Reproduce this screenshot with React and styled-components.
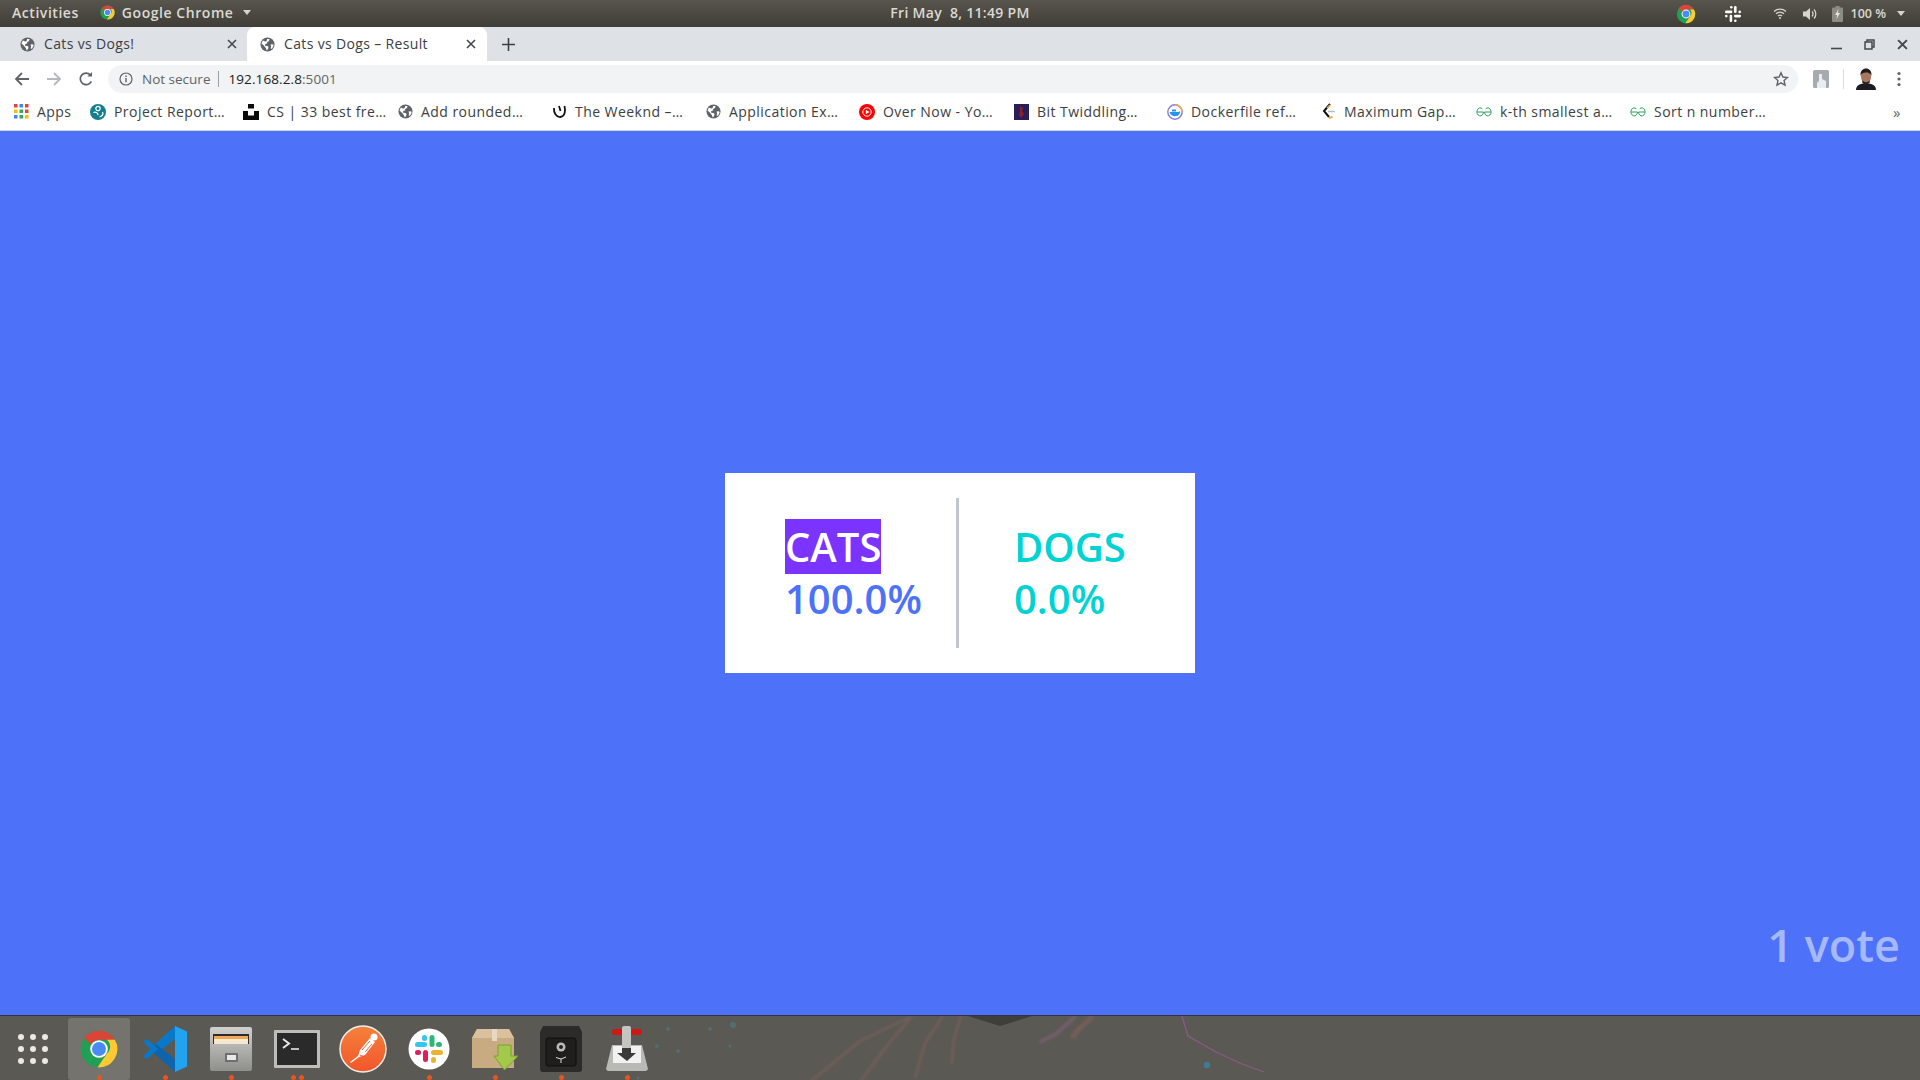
import React from 'react'
import styled, { createGlobalStyle } from 'styled-components'

const GlobalStyle = createGlobalStyle`
  html, body { margin: 0; padding: 0; height: 100%; overflow: hidden; }
  #root { height: 100%; }
`

const Screen = styled.div`
  width: 1920px;
  height: 1080px;
  display: flex;
  flex-direction: column;
  font-family: "Open Sans", "Noto Sans", sans-serif;
  overflow: hidden;
`

const TopBar = styled.div`
  height: 27px;
  flex: none;
  display: grid;
  grid-template-columns: 1fr auto 1fr;
  align-items: center;
  padding: 0 12px;
  background: linear-gradient(#58554d, #3f3d37);
  color: #dbd9d2;
  font-size: 14px;
  font-weight: 600;
  letter-spacing: .55px;
  white-space: pre;
`

const TopLeft = styled.div`
  display: flex;
  align-items: center;
  transform: translateY(-1px);
`

const AppMenu = styled.div`
  display: flex;
  align-items: center;
  gap: 6px;
  margin-left: 20px;
`

const Clock = styled.span`
  letter-spacing: .3px;
  transform: translateY(-1px);
`

const TopRight = styled.div`
  display: flex;
  align-items: center;
  justify-content: flex-end;
  padding-right: 3px;
  font-size: 12.5px;
  letter-spacing: 0;
`

const TrayIcon = styled.span`
  display: flex;
  margin-right: ${p => p.$gap || 0}px;
`

const Caret = styled.span`
  width: 0;
  height: 0;
  border-left: 4.5px solid transparent;
  border-right: 4.5px solid transparent;
  border-top: 5px solid #d6d4cd;
  margin-left: ${p => p.$left || 0}px;
`

const TabStrip = styled.div`
  height: 34px;
  flex: none;
  display: flex;
  align-items: stretch;
  background: #dee1e6;
  color: #3c4043;
`

const Tab = styled.div`
  width: ${p => p.$width}px;
  box-sizing: border-box;
  display: flex;
  align-items: center;
  gap: 9px;
  padding: 0 ${p => p.$active ? 11 : 10}px 0 ${p => p.$active ? 13 : 20}px;
  background: ${p => p.$active ? '#fff' : 'transparent'};
  border-radius: ${p => p.$active ? '8px 8px 0 0' : '0'};
  white-space: nowrap;
`

const TabTitle = styled.span`
  flex: 1;
  font-size: 14px;
  letter-spacing: .35px;
  transform: translateY(-1px);
`

const NewTab = styled.div`
  width: 42px;
  display: flex;
  align-items: center;
  justify-content: center;
`

const WindowControls = styled.div`
  margin-left: auto;
  display: flex;
  align-items: center;
  gap: 22px;
  padding-right: 12px;
`

const Toolbar = styled.div`
  height: 32px;
  flex: none;
  box-sizing: border-box;
  padding-top: 4px;
  display: flex;
  align-items: center;
  background: #fff;
`

const NavButtons = styled.div`
  width: 108px;
  flex: none;
  display: flex;
  align-items: center;
  gap: 16px;
  padding-left: 14px;
  box-sizing: border-box;
`

const AddressBar = styled.div`
  width: 1690px;
  height: 28px;
  flex: none;
  box-sizing: border-box;
  display: flex;
  align-items: center;
  padding: 0 9px 0 11px;
  border-radius: 14px;
  background: #f1f3f4;
  font-size: 13.5px;
  color: #5f6368;
`

const Secure = styled.span`
  margin-left: 9px;
  padding-right: 8px;
  border-right: 1px solid #9aa0a6;
  line-height: 16px;
`

const Url = styled.span`
  margin-left: 9px;
  color: #202124;
  flex: 1;
  letter-spacing: .1px;
`

const UrlPort = styled.span`
  color: #5f6368;
`

const ToolbarEnd = styled.div`
  display: flex;
  align-items: center;
  padding-left: 15px;
`

const ToolbarDivider = styled.span`
  width: 1px;
  height: 20px;
  background: #dadce0;
  margin: 0 12px 0 14px;
`

const KebabSlot = styled.span`
  display: flex;
  margin-left: 21px;
`

const BookmarksBar = styled.div`
  height: 38px;
  flex: none;
  box-sizing: border-box;
  display: flex;
  align-items: center;
  padding-left: 14px;
  background: #fff;
  border-bottom: 1px solid #cfd1d4;
  font-size: 14px;
  letter-spacing: .45px;
  color: #3c4043;
`

const Bookmark = styled.div`
  width: ${p => p.$width || 154}px;
  flex: none;
  display: flex;
  align-items: center;
  gap: 8px;
  white-space: nowrap;
`

const BookmarkMore = styled.span`
  margin-left: auto;
  padding-right: 19px;
  font-size: 15px;
  color: #5f6368;
`

const Page = styled.main`
  flex: 1;
  position: relative;
  display: flex;
  align-items: center;
  justify-content: center;
  background: #4d72f9;
`

const ResultCard = styled.section`
  width: 470px;
  height: 200px;
  display: flex;
  align-items: center;
  background: #fff;
  font-size: 40px;
  font-weight: 600;
  line-height: 52px;
`

const Choice = styled.div`
  flex: none;
  width: ${p => p.$width}px;
  height: 150px;
  box-sizing: border-box;
  padding-top: 23px;
  padding-left: ${p => p.$pad}px;
  border-right: ${p => p.$divider ? '3px solid #bfc6d0' : 'none'};
  color: ${p => p.$color};
`

const Winner = styled.span`
  background: #7b33ff;
  color: #fff;
`

const VoteCount = styled.div`
  position: absolute;
  right: 20px;
  bottom: 40px;
  color: #a6b9fc;
  font-size: 45px;
  font-weight: 600;
  line-height: 60px;
`

const Dock = styled.footer`
  height: 65px;
  flex: none;
  position: relative;
  display: flex;
  align-items: center;
  background: #5b5954;
  border-top: 1px solid #34333a;
  box-sizing: border-box;
`

const Wallpaper = styled.svg`
  position: absolute;
  left: 0;
  top: 0;
`

const DockItem = styled.div`
  position: relative;
  width: 62px;
  height: 62px;
  flex: none;
  display: flex;
  align-items: center;
  justify-content: center;
  box-sizing: border-box;
  border-radius: 3px;
  background: ${p => p.$active ? '#75736e' : 'transparent'};
  margin: 2px 2px 0;
`

const RunDots = styled.div`
  position: absolute;
  bottom: 0;
  left: 0;
  right: 0;
  display: flex;
  justify-content: center;
  gap: 3px;
`

const RunDot = styled.span`
  width: 5px;
  height: 5px;
  border-radius: 50%;
  background: #e9541f;
`

const Chrome = ({ size }) => (
  <svg width={size} height={size} viewBox="0 0 48 48">
    <circle cx="24" cy="24" r="20" fill="#1fa055" />
    <path d="M7.7 12.4A20 20 0 0 1 41.32 14H24a10 10 0 0 0-8.66 5z" fill="#db4437" />
    <path d="M41.32 14A20 20 0 0 1 22.5 44l10.16-15a10 10 0 0 0 0-15z" fill="#fcc934" />
    <circle cx="24" cy="24" r="9.6" fill="#fff" />
    <circle cx="24" cy="24" r="7.6" fill="#4a8af4" />
  </svg>
)

const Globe = () => (
  <svg width="15" height="15" viewBox="0 0 16 16">
    <circle cx="8" cy="8" r="7.5" fill="#5f6368" />
    <path d="M3 3.6l2.6 1.3 1.4-.5.6-2.4 2.6.1-.7 2.2-2 1.2.1 1.5-2 .4-.2 2 2.6.1 1.1 1.2-.5 2.1-1.4 1.6-1-2.7-2.2-2.6L1.6 7zM11.2 8l2.8-.2.5 1.6-1.8 3-1.4-.2.6-2.2z" fill="#fff" />
  </svg>
)

const Close = ({ size = 10, color = '#45484c', width = 1.6 }) => (
  <svg width={size} height={size} viewBox="0 0 10 10">
    <path d="M1 1l8 8M9 1L1 9" stroke={color} strokeWidth={width} fill="none" />
  </svg>
)

const SlackMono = () => (
  <svg width="18" height="18" viewBox="0 0 18 18" fill="#fff">
    <rect x="10" y="1" width="2.600" height="7" rx="1.300" />
    <rect x="6" y="1" width="2.600" height="2.600" rx="1.300" />
    <rect x="1" y="5.600" width="7.400" height="2.600" rx="1.300" />
    <rect x="14.400" y="5.600" width="2.600" height="2.600" rx="1.300" />
    <rect x="10" y="9.800" width="7" height="2.600" rx="1.300" />
    <rect x="1" y="9.800" width="2.600" height="2.600" rx="1.300" />
    <rect x="5.600" y="9.800" width="2.600" height="7.200" rx="1.300" />
    <rect x="10" y="14.400" width="2.600" height="2.600" rx="1.300" />
  </svg>
)

const Wifi = () => (
  <svg width="14" height="13" viewBox="0 0 14 13" fill="none" stroke="#d6d4cd" strokeWidth="1.4">
    <path d="M1 4.4a9 9 0 0 1 12 0M3 6.8a6 6 0 0 1 8 0M5 9a3 3 0 0 1 4 0" />
    <circle cx="7" cy="11" r="1" fill="#d6d4cd" stroke="none" />
  </svg>
)

const Volume = () => (
  <svg width="16" height="14" viewBox="0 0 16 14" fill="none" stroke="#d6d4cd" strokeWidth="1.3">
    <path d="M1 4.5h3L8 1v12L4 9.5H1z" fill="#d6d4cd" stroke="none" />
    <path d="M10 4.5a3.5 3.5 0 0 1 0 5M12 2.5a6.5 6.5 0 0 1 0 9" />
  </svg>
)

const Battery = () => (
  <svg width="11" height="16" viewBox="0 0 11 16">
    <path d="M3.5 0h4v1.500H10a1 1 0 0 1 1 1V15a1 1 0 0 1-1 1H1a1 1 0 0 1-1-1V2.500a1 1 0 0 1 1-1h2.500z" fill="#8d8b85" />
    <path d="M6.500 3L3 9h2.200l-.7 4L8 7H5.800z" fill="#e6e4dd" />
  </svg>
)

const Arrow = ({ color, flip }) => (
  <svg width="16" height="16" viewBox="0 0 16 16" fill="none" stroke={color} strokeWidth="1.8" transform={flip ? 'scale(-1 1)' : undefined}>
    <path d="M15 8H2M8 2L2 8l6 6" />
  </svg>
)

const Reload = () => (
  <svg width="16" height="16" viewBox="0 0 16 16" fill="none" stroke="#5f6368" strokeWidth="1.7">
    <path d="M13.300 10.400A5.800 5.800 0 1 1 12.400 4" />
    <path d="M14 1v4.600H9.400z" fill="#5f6368" stroke="none" />
  </svg>
)

const Info = () => (
  <svg width="14" height="14" viewBox="0 0 14 14" fill="none" stroke="#5f6368" strokeWidth="1.2">
    <circle cx="7" cy="7" r="6" />
    <path d="M7 6v4.200M7 3.600v1.300" strokeWidth="1.4" />
  </svg>
)

const Star = () => (
  <svg width="16" height="16" viewBox="0 0 16 16" fill="none" stroke="#5f6368" strokeWidth="1.4">
    <path d="M8 1.800l1.900 4.200 4.600.5-3.400 3.100.9 4.500-4-2.300-4 2.300.9-4.500L1.500 6.500 6.100 6z" />
  </svg>
)

const Extension = () => (
  <svg width="16" height="18" viewBox="0 0 16 18">
    <rect width="16" height="18" rx="1.500" fill="#a6abb0" />
    <path d="M6 4h3v5l4 2v7H4v-5L6 11z" fill="#e9edf3" />
  </svg>
)

const Avatar = () => (
  <svg width="20" height="22" viewBox="0 0 20 22">
    <path d="M0 22c0-5 4-6.500 10-6.500S20 17 20 22z" fill="#1c1a22" />
    <ellipse cx="10" cy="9" rx="5" ry="6.500" fill="#a9785c" />
    <path d="M4.600 8C4 2.500 7 .5 10 .5s6 2 5.400 7.500C14.500 5 12 4.500 10 4.500S5.500 5 4.600 8z" fill="#211b1b" />
    <path d="M6.500 12c1 3 6 3 7 0l.3 2.500c-2 2.500-6 2.500-7.600 0z" fill="#2b2222" />
  </svg>
)

const Kebab = () => (
  <svg width="4" height="16" viewBox="0 0 4 16" fill="#5f6368">
    <circle cx="2" cy="2.500" r="1.600" />
    <circle cx="2" cy="8" r="1.600" />
    <circle cx="2" cy="13.500" r="1.600" />
  </svg>
)

const AppsGrid = () => {
  const colors = ['#ea4335', '#4285f4', '#ea4335', '#fbbc05', '#34a853', '#ea4335', '#4285f4', '#34a853', '#fbbc05']
  return (
    <svg width="15" height="15" viewBox="0 0 15 15">
      {colors.map((c, i) => (
        <rect key={i} x={(i % 3) * 5.500} y={Math.floor(i / 3) * 5.500} width="3.500" height="3.500" fill={c} />
      ))}
    </svg>
  )
}

const ProjectReport = () => (
  <svg width="16" height="16" viewBox="0 0 16 16" fill="none">
    <circle cx="8" cy="8" r="8" fill="#14808f" />
    <circle cx="8" cy="4.500" r="2.200" stroke="#fff" strokeWidth="1.200" />
    <path d="M3.500 8.500a3 3 0 0 1 4.500 2.500M12.500 8a3 3 0 0 1-3 4.500" stroke="#fff" strokeWidth="1.300" />
  </svg>
)

const Unsplash = () => (
  <svg width="16" height="16" viewBox="0 0 16 16" fill="#0b0b0b">
    <rect x="5" y="0" width="6" height="4.500" />
    <path d="M0 7h5v4.500h6V7h5v9H0z" />
  </svg>
)

const Weeknd = () => (
  <svg width="15" height="15" viewBox="0 0 15 15" fill="none" stroke="#111" strokeWidth="1.800">
    <path d="M2 4c-.5 5 2.500 9.500 6.500 9S14 8 12.500 2" />
    <path d="M7 2l1.500 5" />
  </svg>
)

const YoutubeMusic = () => (
  <svg width="16" height="16" viewBox="0 0 16 16">
    <circle cx="8" cy="8" r="8" fill="#f00" />
    <circle cx="8" cy="8" r="4.200" fill="none" stroke="#fff" strokeWidth="1" />
    <path d="M6.800 5.800L10.500 8l-3.700 2.200z" fill="#fff" />
  </svg>
)

const BitTwiddling = () => (
  <svg width="15" height="16" viewBox="0 0 15 16">
    <rect width="15" height="16" fill="#2a1e58" />
    <path d="M6 2l3 2-1 3 2 3-3 4-2-3 1-3z" fill="#8c1f2e" />
  </svg>
)

const Docker = () => (
  <svg width="16" height="16" viewBox="0 0 16 16">
    <circle cx="8" cy="8" r="7.200" fill="#fff" stroke="#8a7bd6" strokeWidth="1.400" />
    <path d="M8 .8A7.200 7.200 0 0 1 15.200 8" fill="none" stroke="#f0a050" strokeWidth="1.400" />
    <path d="M2.500 8h8.500c.8 0 1.500-.5 2-1 .3 1.500-.5 3.500-2 4.500-3 1.500-7 1-8.500-3.500z" fill="#2496ed" />
    <rect x="5" y="5.500" width="4" height="2" fill="#2496ed" />
  </svg>
)

const Leetcode = () => (
  <svg width="14" height="17" viewBox="0 0 14 17" fill="none">
    <path d="M8 1L2 8l5 6" stroke="#111" strokeWidth="2" />
    <path d="M7 15.500l3.500-2" stroke="#f5a623" strokeWidth="2" />
    <path d="M6 8.500h7" stroke="#bbb" strokeWidth="1.500" />
    <path d="M5 5l3-3" stroke="#f5a623" strokeWidth="1.500" />
  </svg>
)

const Gfg = () => (
  <svg width="16" height="12" viewBox="0 0 16 12" fill="none" stroke="#2f9e5e" strokeWidth="1">
    <path d="M1 6h6.500a3.300 4 0 1 1-1.200-3.200M15 6H8.500a3.300 4 0 1 0 1.200-3.200" />
  </svg>
)

const Vscode = () => (
  <svg width="46" height="48" viewBox="0 0 46 48">
    <path d="M33 1l12 5.500v35L33 47z" fill="#22a3ee" />
    <path d="M33 1v13L14 29l-6.500-5L33 1z" fill="#0a78c8" />
    <path d="M33 47V34L14 19l-6.500 5L33 47z" fill="#0f65ad" />
    <path d="M1 16.500l4-2.500 11 10-11 10-4-2.500 7.500-7.500z" fill="#0a78c8" />
  </svg>
)

const FileCabinet = () => (
  <svg width="42" height="46" viewBox="0 0 42 46">
    <defs>
      <linearGradient id="cab" x1="0" y1="0" x2="0" y2="1">
        <stop offset="0" stopColor="#d0d0ce" />
        <stop offset="1" stopColor="#8f8f8c" />
      </linearGradient>
    </defs>
    <rect x="0" y="1" width="42" height="44" rx="2" fill="url(#cab)" />
    <rect x="3" y="8" width="36" height="10" fill="#2d2c2a" />
    <rect x="4" y="10" width="34" height="5" fill="#f2a65a" />
    <rect x="4" y="13" width="34" height="5" fill="#f6e8cf" />
    <rect x="15" y="27" width="13" height="9" rx="1" fill="#6e6e6c" />
    <rect x="17" y="29" width="9" height="5" fill="#e8e8e6" />
  </svg>
)

const Terminal = () => (
  <svg width="46" height="38" viewBox="0 0 46 38">
    <rect width="46" height="38" rx="1" fill="#bdbdba" />
    <rect x="3" y="3" width="40" height="32" fill="#2a2a2a" />
    <path d="M9 9l6 4.500-6 4.500" fill="none" stroke="#e8e8e8" strokeWidth="2" />
    <path d="M17 19h8" stroke="#e8e8e8" strokeWidth="1.600" />
  </svg>
)

const Postman = () => (
  <svg width="48" height="48" viewBox="0 0 48 48">
    <defs>
      <linearGradient id="post" x1="0" y1="0" x2="0" y2="1">
        <stop offset="0" stopColor="#f5813b" />
        <stop offset="1" stopColor="#f2562b" />
      </linearGradient>
    </defs>
    <circle cx="24" cy="24" r="23" fill="url(#post)" stroke="#f3f0ec" strokeWidth="1.500" />
    <path d="M11 37l8-6 2-6 10-12 5 4-10 13-6 2-8 6z" fill="#fff" />
    <path d="M23 25l8-9M26 27l7-8M21 30l5 2" stroke="#f2562b" strokeWidth=".9" />
    <circle cx="35" cy="12" r="3.500" fill="#fff" />
  </svg>
)

const SlackDock = () => (
  <svg width="42" height="42" viewBox="0 0 42 42">
    <circle cx="21" cy="21" r="20.500" fill="#fff" />
    <rect x="7" y="14" width="12" height="5" rx="2.500" fill="#36c5f0" />
    <rect x="14" y="7" width="5" height="6" rx="2.500" fill="#36c5f0" />
    <rect x="21.500" y="7" width="5" height="12" rx="2.500" fill="#2eb67d" />
    <rect x="28" y="14" width="6" height="5" rx="2.500" fill="#2eb67d" />
    <rect x="23" y="22" width="12" height="5" rx="2.500" fill="#ecb22e" />
    <rect x="23" y="29" width="5" height="6" rx="2.500" fill="#ecb22e" />
    <rect x="15" y="22" width="5" height="12" rx="2.500" fill="#e01e5a" />
    <rect x="7" y="22" width="6" height="5" rx="2.500" fill="#e01e5a" />
  </svg>
)

const PackageBox = () => (
  <svg width="46" height="42" viewBox="0 0 46 42">
    <path d="M0 10L5 1h32l5 9v30H0z" fill="#c9ab82" />
    <path d="M0 10L5 1h32l5 9z" fill="#d9c19e" />
    <path d="M20 1h5v12h-5z" fill="#e6d8c2" />
    <path d="M26 17h13v11h7L32.500 42 22 28h4z" fill="#a3c94a" stroke="#7f9e36" strokeWidth="1" />
  </svg>
)

const Safe = () => (
  <svg width="42" height="46" viewBox="0 0 42 46">
    <path d="M3 0h36l3 6v37a3 3 0 0 1-3 3H3a3 3 0 0 1-3-3V6z" fill="#2c2b29" />
    <rect x="6" y="12" width="30" height="28" rx="2" fill="#1f1e1d" stroke="#0e0e0d" />
    <circle cx="21" cy="21" r="4.500" fill="#bbb" />
    <circle cx="21" cy="21" r="2" fill="#222" />
    <path d="M21 33l-5-1.500M21 33l5-2M21 33v4" stroke="#ddd" strokeWidth="1" />
  </svg>
)

const Transmission = () => (
  <svg width="42" height="46" viewBox="0 0 42 46">
    <path d="M0 43l6-24h30l6 24a3 3 0 0 1-3 2H3a3 3 0 0 1-3-2z" fill="#b9b9b6" />
    <rect x="7" y="20" width="28" height="17" fill="#f2f2f0" />
    <rect x="6" y="3" width="30" height="6" rx="3" fill="#d01616" />
    <rect x="16" y="0" width="9" height="24" rx="2" fill="#c4c4c1" />
    <path d="M11 27h5v-5h9v5h5l-9 8z" fill="#3a3a38" />
  </svg>
)

const bookmarks = [
  { icon: <ProjectReport />, label: 'Project Report…', width: 153 },
  { icon: <Unsplash />, label: 'CS | 33 best fre…', width: 155 },
  { icon: <Globe />, label: 'Add rounded…' },
  { icon: <Weeknd />, label: 'The Weeknd –…' },
  { icon: <Globe />, label: 'Application Ex…', width: 153 },
  { icon: <YoutubeMusic />, label: 'Over Now - Yo…', width: 155 },
  { icon: <BitTwiddling />, label: 'Bit Twiddling…', width: 153 },
  { icon: <Docker />, label: 'Dockerfile ref…', width: 155 },
  { icon: <Leetcode />, label: 'Maximum Gap…' },
  { icon: <Gfg />, label: 'k-th smallest a…' },
  { icon: <Gfg />, label: 'Sort n number…' },
]

const dockApps = [
  { icon: <Chrome size={44} />, active: true, dots: 1 },
  { icon: <Vscode />, dots: 1 },
  { icon: <FileCabinet />, dots: 1 },
  { icon: <Terminal />, dots: 2 },
  { icon: <Postman />, dots: 0 },
  { icon: <SlackDock />, dots: 1 },
  { icon: <PackageBox />, dots: 1 },
  { icon: <Safe />, dots: 1 },
  { icon: <Transmission />, dots: 1 },
]

const specks = [[733, 9, 3], [668, 13, 2], [710, 13, 2], [657, 30, 2], [678, 35, 2], [638, 62, 1.500], [730, 30, 1.500]]

const App = () => (
  <Screen>
    <GlobalStyle />
    <TopBar>
      <TopLeft>
        <span>Activities</span>
        <AppMenu>
          <Chrome size={17} />
          <span>Google Chrome</span>
          <Caret $left={4} />
        </AppMenu>
      </TopLeft>
      <Clock>Fri May  8, 11:49 PM</Clock>
      <TopRight>
        <TrayIcon $gap={27}><Chrome size={22} /></TrayIcon>
        <TrayIcon $gap={31}><SlackMono /></TrayIcon>
        <TrayIcon $gap={15}><Wifi /></TrayIcon>
        <TrayIcon $gap={14}><Volume /></TrayIcon>
        <TrayIcon $gap={8}><Battery /></TrayIcon>
        <span>100 %</span>
        <Caret $left={11} />
      </TopRight>
    </TopBar>

    <TabStrip>
      <Tab $width={247}>
        <Globe />
        <TabTitle>Cats vs Dogs!</TabTitle>
        <Close />
      </Tab>
      <Tab $width={240} $active>
        <Globe />
        <TabTitle>Cats vs Dogs – Result</TabTitle>
        <Close />
      </Tab>
      <NewTab>
        <svg width="13" height="13" viewBox="0 0 13 13"><path d="M6.500 0v13M0 6.500h13" stroke="#3c4043" strokeWidth="1.600" /></svg>
      </NewTab>
      <WindowControls>
        <svg width="11" height="11" viewBox="0 0 11 11"><path d="M0 9.500h11" stroke="#45484c" strokeWidth="1.600" /></svg>
        <svg width="11" height="11" viewBox="0 0 11 11" fill="none" stroke="#45484c" strokeWidth="1.500"><path d="M3 3V1h7v7H8" /><rect x="1" y="3" width="7" height="7" /></svg>
        <Close size={11} width={1.8} />
      </WindowControls>
    </TabStrip>

    <Toolbar>
      <NavButtons>
        <Arrow color="#5f6368" />
        <Arrow color="#b5b8bc" flip />
        <Reload />
      </NavButtons>
      <AddressBar>
        <Info />
        <Secure>Not secure</Secure>
        <Url>192.168.2.8<UrlPort>:5001</UrlPort></Url>
        <Star />
      </AddressBar>
      <ToolbarEnd>
        <Extension />
        <ToolbarDivider />
        <Avatar />
        <KebabSlot><Kebab /></KebabSlot>
      </ToolbarEnd>
    </Toolbar>

    <BookmarksBar>
      <Bookmark $width={76}>
        <AppsGrid />
        <span>Apps</span>
      </Bookmark>
      {bookmarks.map(b => (
        <Bookmark key={b.label} $width={b.width}>
          {b.icon}
          <span>{b.label}</span>
        </Bookmark>
      ))}
      <BookmarkMore>»</BookmarkMore>
    </BookmarksBar>

    <Page>
      <ResultCard>
        <Choice $width={234} $pad={60} $color="#4d72f9" $divider>
          <div><Winner>CATS</Winner></div>
          <div>100.0%</div>
        </Choice>
        <Choice $width={236} $pad={55} $color="#00d3d3">
          <div>DOGS</div>
          <div>0.0%</div>
        </Choice>
      </ResultCard>
      <VoteCount>1 vote</VoteCount>
    </Page>

    <Dock>
      <Wallpaper width="1920" height="64" viewBox="0 0 1920 64" fill="none">
        <defs>
          <filter id="soft"><feGaussianBlur stdDeviation="1" /></filter>
        </defs>
        <g filter="url(#soft)">
          <path d="M810 66L860 25 912 0M860 66l30-40 22-26M915 62l10-35 18-27M952 48l2-25 7-23" stroke="#7d5f5a" strokeWidth="3" opacity=".6" />
          <path d="M1040 26l16-8 20-18" stroke="#7d5f72" strokeWidth="4" opacity=".7" />
          <path d="M1072 22l6-8 15-14" stroke="#85605a" strokeWidth="5" opacity=".6" />
        </g>
        <path d="M968 0h64l-32 10z" fill="#3f3e3a" />
        <path d="M1182 0l6 20 28 16 26 12 22 8" stroke="#8a5a84" strokeWidth="1.300" />
        <circle cx="1207" cy="49" r="3.200" fill="#3c7d96" />
        {specks.map(([x, y, r]) => <circle key={x} cx={x} cy={y} r={r} fill="#50706e" />)}
      </Wallpaper>
      <DockItem>
        <svg width="32" height="32" viewBox="0 0 32 32" fill="#ece9e4">
          {[0, 1, 2, 3, 4, 5, 6, 7, 8].map(i => (
            <circle key={i} cx={4 + (i % 3) * 12} cy={4 + Math.floor(i / 3) * 12} r="3" />
          ))}
        </svg>
      </DockItem>
      {dockApps.map((app, i) => (
        <DockItem key={i} $active={app.active}>
          {app.icon}
          <RunDots>
            {Array.from({ length: app.dots }).map((_, d) => <RunDot key={d} />)}
          </RunDots>
        </DockItem>
      ))}
    </Dock>
  </Screen>
)

export default App
